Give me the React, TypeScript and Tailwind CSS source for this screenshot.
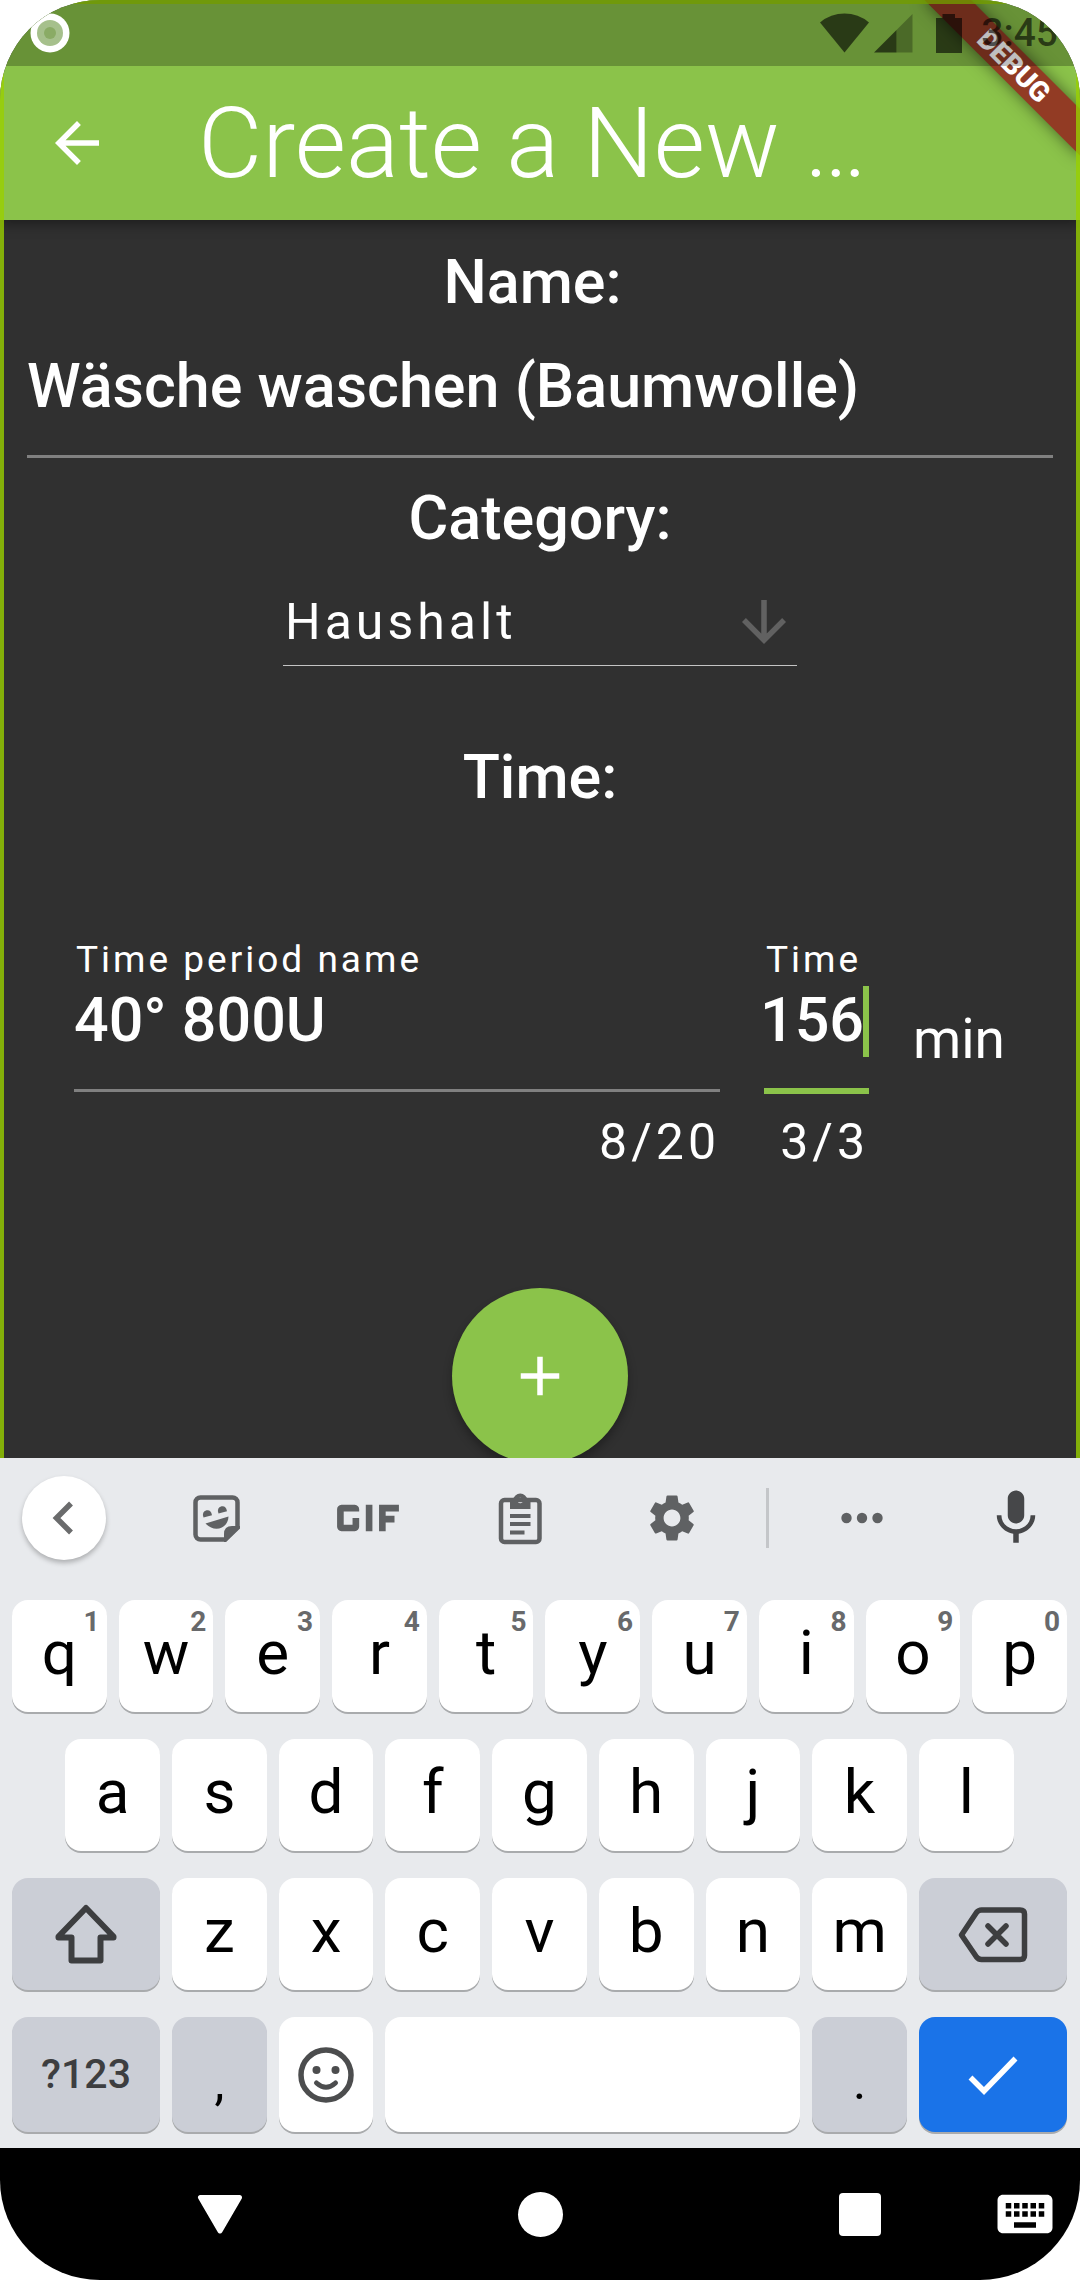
import type { ReactNode } from 'react';
import { MdAdd, MdArrowBack, MdArrowDownward, MdGif, MdKeyboard, MdMic, MdSettings } from 'react-icons/md';

const TOP_ROW = [
  ['q', '1'], ['w', '2'], ['e', '3'], ['r', '4'], ['t', '5'],
  ['y', '6'], ['u', '7'], ['i', '8'], ['o', '9'], ['p', '0'],
];
const HOME_ROW = ['a', 's', 'd', 'f', 'g', 'h', 'j', 'k', 'l'];
const BOTTOM_ROW = ['z', 'x', 'c', 'v', 'b', 'n', 'm'];

function StatusBar() {
  return (
    <div className="relative z-30 flex h-[66px] items-center justify-between bg-black/25 pl-[30px] pr-[22px]">
      <svg className="size-10" viewBox="0 0 40 40" aria-hidden="true">
        <circle cx="20" cy="20" r="19.5" fill="#fff" />
        <circle cx="20" cy="20" r="13" fill="#a6c08c" />
        <circle cx="20" cy="20" r="6" fill="#8aab65" />
      </svg>
      <div className="flex items-center text-black/60">
        <svg className="h-10 w-[142px]" viewBox="0 0 142 40" fill="currentColor" aria-hidden="true">
          <path d="M0 9.500A38 38 0 0 1 49 9.500L24.500 39.500Z" />
          <path d="M54 39.500L76.500 17V39.500Z" />
          <path d="M76.500 17L92.500 1V39.500H76.500Z" opacity="0.45" />
          <path d="M116 5H122.500V1H135V5H142V40H116Z" />
        </svg>
        <span className="ml-[19px] text-[39px] leading-[46px] font-medium">3:45</span>
      </div>
    </div>
  );
}

function Key({ label, hint }: { label: string; hint?: string }) {
  return (
    <button
      type="button"
      className="relative col-span-2 mx-[6px] h-[112px] rounded-2xl bg-white pb-[7px] text-[62px] leading-[105px] text-black shadow-[0_2px_0_#a9abad]"
    >
      {label}
      {hint && (
        <span className="absolute top-[6px] right-[7px] text-[28px] leading-[32px] font-bold text-[#68696b]">{hint}</span>
      )}
    </button>
  );
}

function Tool({ label, className = '', children }: { label: string; className?: string; children: ReactNode }) {
  return (
    <div className={`flex items-center justify-center ${className}`}>
      <button type="button" aria-label={label} className="flex items-center justify-center">
        {children}
      </button>
    </div>
  );
}

function Keyboard() {
  return (
    <section aria-label="Keyboard" className="bg-[#e8eaed] pb-4">
      <div className="grid h-[120px] grid-cols-[140fr_152fr_152fr_152fr_152fr_39fr_149fr_144fr] text-[#5f6163]">
        <Tool label="Collapse toolbar" className="pr-3">
          <span className="flex size-[84px] items-center justify-center rounded-full bg-white shadow-[0_3px_5px_rgba(0,0,0,0.25)]">
            <svg className="size-10" viewBox="0 0 40 40" fill="none" stroke="#6a6b6c" strokeWidth="5.500">
              <path d="M27 5.500L12.500 20L27 34.500" />
            </svg>
          </span>
        </Tool>
        <Tool label="Stickers">
          <svg className="size-[60px]" viewBox="0 0 60 60" fill="currentColor">
            <path
              d="M51.500 39V14.500A5 5 0 0 0 46.500 9.500H14.500A5 5 0 0 0 9.500 14.500V46.500A5 5 0 0 0 14.500 51.500H39Z"
              fill="none"
              stroke="currentColor"
              strokeWidth="4.500"
            />
            <path d="M54 38V40.500L40 54H38V46Q38 38 46 38Z" />
            <path d="M17.500 29.500Q15.500 23.500 20.500 22.300Q25 21.500 26 27.200Z" />
            <path d="M32.500 25.500Q30.500 19.500 35.500 18.300Q40 17.500 41 23.200Z" />
            <path d="M19.500 35.500L42.500 28.500C42 41 28 45 19.500 35.500Z" />
          </svg>
        </Tool>
        <Tool label="GIFs">
          <MdGif className="size-[106px]" />
        </Tool>
        <Tool label="Clipboard">
          <svg className="size-[60px]" viewBox="0 0 60 60" fill="currentColor">
            <rect x="11" y="12" width="38.500" height="42" rx="3.500" fill="none" stroke="currentColor" strokeWidth="4.500" />
            <path
              fillRule="evenodd"
              d="M20 12H23A7.300 7.300 0 0 1 37.500 12H40.500V21H20ZM30.250 9.800A2.700 2.700 0 1 0 30.250 15.200A2.700 2.700 0 1 0 30.250 9.800Z"
            />
            <path d="M20 26H40.500V30H20ZM20 34H40.500V38H20ZM20 42.500H34.500V46.500H20Z" />
          </svg>
        </Tool>
        <Tool label="Settings">
          <MdSettings className="size-14" />
        </Tool>
        <div className="flex items-center justify-center">
          <div className="h-[60px] w-[3px] bg-[#c4c6c9]" />
        </div>
        <Tool label="More">
          <svg className="h-10 w-[42px]" viewBox="0 0 42 40" fill="currentColor">
            <circle cx="5.500" cy="20" r="5.200" />
            <circle cx="21" cy="20" r="5.200" />
            <circle cx="36.500" cy="20" r="5.200" />
          </svg>
        </Tool>
        <Tool label="Voice input" className="pl-4 text-[#464749]">
          <MdMic className="size-[66px]" />
        </Tool>
      </div>

      <div className="mt-[22px] grid grid-cols-20 gap-y-[27px] pr-[7px] pl-[6px]">
        {TOP_ROW.map(([label, hint]) => (
          <Key key={label} label={label} hint={hint} />
        ))}
        <span aria-hidden="true" />
        {HOME_ROW.map((label) => (
          <Key key={label} label={label} />
        ))}
        <span aria-hidden="true" />

        <button
          type="button"
          aria-label="Shift"
          className="col-span-3 mx-[6px] flex h-[112px] items-center justify-center rounded-2xl bg-[#cbced6] text-[#3d3e40] shadow-[0_2px_0_#a9abad]"
        >
          <svg className="size-[68px]" viewBox="0 0 68 68" fill="none" stroke="currentColor" strokeWidth="6">
            <path strokeLinejoin="round" d="M34 8L6.500 36.500V37.500H19.500V60.500H48.500V37.500H61.500V36.500Z" />
          </svg>
        </button>
        {BOTTOM_ROW.map((label) => (
          <Key key={label} label={label} />
        ))}
        <button
          type="button"
          aria-label="Backspace"
          className="col-span-3 mx-[6px] flex h-[112px] items-center justify-center rounded-2xl bg-[#cbced6] text-[#3d3e40] shadow-[0_2px_0_#a9abad]"
        >
          <svg className="h-[74px] w-[86px]" viewBox="0 0 86 74" fill="none" stroke="currentColor" strokeWidth="5.500">
            <path d="M11.500 38L26.500 15.500Q28.500 13 31.500 13H70Q74.500 13 74.500 17V58.500Q74.500 62.500 70 62.500H31.500Q28.500 62.500 26.500 60Z" strokeLinejoin="round" />
            <path d="M38 29L56 47M56 29L38 47" strokeLinecap="round" />
          </svg>
        </button>

        <button
          type="button"
          className="col-span-3 mx-[6px] h-[115px] rounded-2xl bg-[#cbced6] text-[41px] leading-[115px] font-medium text-[#3d3e40] shadow-[0_2px_0_#a9abad]"
        >
          ?123
        </button>
        <button
          type="button"
          className="col-span-2 mx-[6px] h-[115px] rounded-2xl bg-[#cbced6] pt-4 text-[50px] leading-[99px] text-black shadow-[0_2px_0_#a9abad]"
        >
          ,
        </button>
        <button
          type="button"
          aria-label="Emoji"
          className="col-span-2 mx-[6px] flex h-[115px] items-center justify-center rounded-2xl bg-white text-[#4c4d4e] shadow-[0_2px_0_#a9abad]"
        >
          <svg className="size-[60px]" viewBox="0 0 60 60" fill="none" stroke="currentColor">
            <circle cx="30" cy="30" r="25" strokeWidth="5.500" />
            <circle cx="20.500" cy="25" r="4" fill="currentColor" stroke="none" />
            <circle cx="39.500" cy="25" r="4" fill="currentColor" stroke="none" />
            <path d="M20.500 38Q30 46.500 39.500 38" strokeWidth="5" strokeLinecap="round" />
          </svg>
        </button>
        <button
          type="button"
          aria-label="Space"
          className="col-span-8 mx-[6px] h-[115px] rounded-2xl bg-white shadow-[0_2px_0_#a9abad]"
        />
        <button
          type="button"
          className="col-span-2 mx-[6px] h-[115px] rounded-2xl bg-[#cbced6] pt-4 text-[50px] leading-[99px] text-black shadow-[0_2px_0_#a9abad]"
        >
          .
        </button>
        <button
          type="button"
          aria-label="Done"
          className="col-span-3 mx-[6px] flex h-[115px] items-center justify-center rounded-2xl bg-[#1a73e8] text-white shadow-[0_2px_0_#a9abad]"
        >
          <svg className="size-[60px]" viewBox="0 0 60 60" fill="none" stroke="currentColor" strokeWidth="5.500">
            <path d="M7.500 32.500L21 46L52.500 13.500" />
          </svg>
        </button>
      </div>
    </section>
  );
}

function NavBar() {
  return (
    <nav aria-label="System navigation" className="grid h-[132px] grid-cols-[320fr_320fr_292fr_88fr] items-center bg-black pl-[60px] text-white">
      <button type="button" aria-label="Back" className="justify-self-center">
        <svg className="size-12" viewBox="0 0 48 48" fill="currentColor" stroke="currentColor" strokeWidth="5" strokeLinejoin="round">
          <path d="M4.500 7.500H43.500L24 41Z" />
        </svg>
      </button>
      <button type="button" aria-label="Home" className="size-[45px] justify-self-center rounded-full bg-white" />
      <div className="flex justify-center pl-7">
        <button type="button" aria-label="Overview" className="h-[43px] w-[42px] rounded bg-white" />
      </div>
      <button type="button" aria-label="Switch keyboard" className="justify-self-start">
        <MdKeyboard className="size-[66px]" />
      </button>
    </nav>
  );
}

export default function App() {
  return (
    <div className="bg-white font-['Roboto',sans-serif]">
      <div className="relative flex h-screen flex-col overflow-hidden rounded-[100px]">
        <div className="relative flex min-h-0 flex-1 flex-col overflow-hidden bg-[#303030] text-white">
          <header className="relative shrink-0 bg-[#8bc34a] shadow-[0_4px_12px_rgba(0,0,0,0.4)]">
            <StatusBar />
            <div className="flex h-[154px] items-center pl-11">
              <button type="button" aria-label="Go back">
                <MdArrowBack className="size-[66px]" />
              </button>
              <h1 className="ml-[88px] truncate text-[99px] leading-[116px] font-light">Create a New …</h1>
            </div>
          </header>

          <main className="min-h-0 flex-1 pt-[26px]">
            <form className="flex flex-col items-center">
              <label htmlFor="name" className="pr-[15px] text-[61px] leading-[72px] font-medium">
                Name:
              </label>
              <div className="w-full px-[27px]">
                <input
                  id="name"
                  defaultValue="Wäsche waschen (Baumwolle)"
                  className="mt-8 block h-[108px] w-full border-b-[3px] border-[#808080] bg-transparent pb-[33px] text-[61px] leading-[72px] font-medium outline-none"
                />
              </div>

              <label htmlFor="category" className="mt-6 text-[61px] leading-[72px] font-medium">
                Category:
              </label>
              <div className="relative mt-[38px] w-[514px] border-b border-[#c4c4c4] pb-[13px]">
                <select
                  id="category"
                  className="block h-[60px] w-full appearance-none bg-transparent pl-[2px] text-[50px] leading-[60px] tracking-[4px] outline-none"
                >
                  <option>Haushalt</option>
                </select>
                <MdArrowDownward className="pointer-events-none absolute top-[-3px] right-0 size-[66px] text-[#616161]" />
              </div>

              <h2 className="mt-[75px] text-[61px] leading-[72px] font-medium">Time:</h2>

              <div className="mt-[126px] flex w-full gap-11 px-[74px]">
                <div className="flex min-w-0 flex-1 flex-col">
                  <label htmlFor="period" className="pl-[2px] text-[37px] leading-[42px] tracking-[3px]">
                    Time period name
                  </label>
                  <input
                    id="period"
                    defaultValue="40° 800U"
                    className="mt-[3px] h-[108px] w-full border-b-[3px] border-[#808080] bg-transparent pb-[33px] text-[61px] leading-[72px] font-medium outline-none"
                  />
                  <span className="mt-5 text-right text-[50px] leading-[60px] tracking-[4px]">8/20</span>
                </div>
                <div className="relative flex w-[105px] flex-col">
                  <label htmlFor="minutes" className="pl-[2px] text-[37px] leading-[42px] tracking-[3px]">
                    Time
                  </label>
                  <div className="mt-[3px] flex h-[110px] justify-end border-b-[6px] border-[#8bc34a] pr-[3px] pb-8">
                    <input
                      id="minutes"
                      defaultValue="156"
                      className="w-[106px] shrink-0 bg-transparent text-[61px] leading-[72px] font-medium outline-none"
                    />
                  </div>
                  <span aria-hidden="true" className="absolute top-[47px] right-0 h-[71px] w-[6px] bg-[#8bc34a]" />
                  <span className="mt-[18px] text-right text-[50px] leading-[60px] tracking-[4px]">3/3</span>
                </div>
                <span className="w-[93px] pt-[67px] text-[55px] leading-[66px]">min</span>
              </div>

              <button
                type="button"
                aria-label="Add time period"
                className="mt-[116px] flex size-44 items-center justify-center rounded-full bg-[#8bc34a] shadow-[0_6px_10px_rgba(0,0,0,0.3)]"
              >
                <MdAdd className="size-[66px]" />
              </button>
            </form>
          </main>

          <div className="absolute top-[77px] right-[-110px] h-[33px] w-[220px] origin-[110px_-77px] rotate-45 bg-[#923b24] text-center text-[28px] leading-[33px] font-black shadow-[0_0_16px_rgba(0,0,0,0.5)]">
            DEBUG
          </div>
          <div className="pointer-events-none absolute inset-0 z-20 border-x-4 border-t-4 border-[rgba(152,208,0,0.8)]" />
        </div>

        <Keyboard />
        <NavBar />
      </div>
    </div>
  );
}
